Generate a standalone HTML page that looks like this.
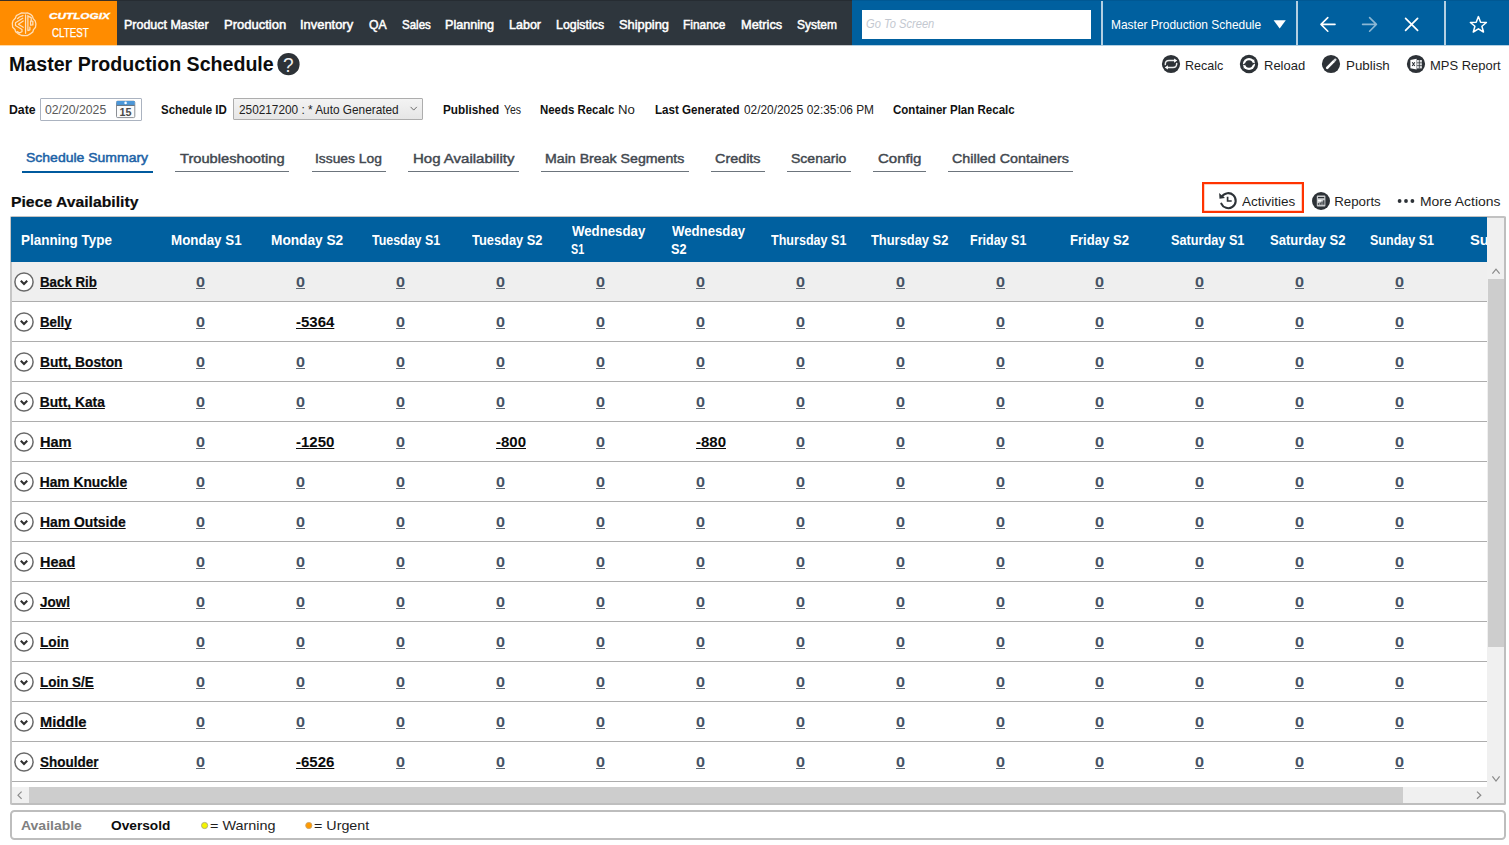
<!DOCTYPE html>
<html lang="en">
<head>
<meta charset="utf-8">
<title>Master Production Schedule</title>
<style>
html,body{margin:0;padding:0}
body{width:1509px;height:845px;position:relative;overflow:hidden;background:#fff;font-family:'Liberation Sans',sans-serif;color:#1e1e1e}
.t{position:absolute;white-space:pre;line-height:40px;transform-origin:0 0;display:block;margin:0;font-weight:400;text-decoration-skip-ink:none}
a.t{cursor:pointer}
svg{display:block;overflow:visible}
</style>
</head>
<body>
<header>
<div style="position:absolute;left:0px;top:0px;width:1509px;height:45px;background:#00609f"></div>
<div style="position:absolute;left:0px;top:0px;width:852px;height:45px;background:#2e363d"></div>
<div style="position:absolute;left:0px;top:0px;width:852px;height:1px;background:#262c32"></div>
<div style="position:absolute;left:0px;top:1px;width:117px;height:44px;background:#ff8c00"></div>
<div style="position:absolute;left:0px;top:0px;width:117px;height:1px;background:#3a3026"></div>
<div style="position:absolute;left:852px;top:0px;width:657px;height:1px;background:#005893"></div>
<div style="position:absolute;left:0px;top:45px;width:117px;height:1px;background:#ffd9a6"></div>
<div style="position:absolute;left:117px;top:45px;width:735px;height:1px;background:#c3c6c9"></div>
<div style="position:absolute;left:852px;top:45px;width:657px;height:1px;background:#b3d0e3"></div>
<svg style="position:absolute;left:10px;top:10px" width="28" height="28" viewBox="0 0 28 28"><path d="M15.08 3.05 L11.60 2.82 L8.95 4.24 L6.30 5.63 L5.30 8.28 L3.05 10.60 L2.32 13.25 L2.65 17.23 L4.97 19.55 L5.63 21.70 L8.28 23.86 L11.60 25.51 L15.08 25.58 L17.56 25.51 L20.21 23.92 L22.86 21.87 L23.53 19.55 L25.51 17.23 L25.91 13.92 L25.18 10.93 L23.19 8.68 L22.53 6.30 L20.54 4.31 L17.89 2.98 Z" fill="none" stroke="#fff" stroke-opacity=".72" stroke-width="1.3" stroke-linejoin="round"/><path d="M12.76 8.28 L5.47 12.76 L5.47 15.57 L11.99 19.55 L11.99 21.70 L9.44 22.86 L7.12 21.54 M13.25 11.00 L8.35 14.25 L13.25 17.23 M12.99 5.70 L9.44 7.02 L7.46 8.68 M15.57 4.97 L15.57 23.36 M17.89 5.30 L17.89 20.54 L19.88 19.88 L19.88 17.23 M18.95 6.63 L21.21 7.69 L21.21 10.93 L22.86 11.43 L22.86 14.91 L20.54 15.08 L20.54 11.10" fill="none" stroke="#fff" stroke-opacity=".74" stroke-width="1.25" stroke-linejoin="round" stroke-linecap="round"/></svg>
<span class="t" style="left:48.87px;top:-4px;font-size:9.4px;font-weight:700;font-style:italic;color:#fff;transform:scaleX(1.2539);-webkit-text-stroke:.35px #fff;">CUTLOGIX</span>
<span class="t" style="left:52.03px;top:13px;font-size:13px;color:#fff;transform:scaleX(0.7539);-webkit-text-stroke:.25px #fff;">CLTEST</span>
<a class="t" style="left:124.44px;top:5px;font-size:13px;color:#fff;transform:scaleX(0.9598);-webkit-text-stroke:.5px #fff;">Product Master</a>
<a class="t" style="left:224.00px;top:5px;font-size:13px;color:#fff;-webkit-text-stroke:.5px #fff;">Production</a>
<a class="t" style="left:300.16px;top:5px;font-size:13px;color:#fff;transform:scaleX(0.9933);-webkit-text-stroke:.5px #fff;">Inventory</a>
<a class="t" style="left:368.70px;top:5px;font-size:13px;color:#fff;transform:scaleX(0.9389);-webkit-text-stroke:.5px #fff;">QA</a>
<a class="t" style="left:401.54px;top:5px;font-size:13px;color:#fff;transform:scaleX(0.8864);-webkit-text-stroke:.5px #fff;">Sales</a>
<a class="t" style="left:444.83px;top:5px;font-size:13px;color:#fff;transform:scaleX(0.9703);-webkit-text-stroke:.5px #fff;">Planning</a>
<a class="t" style="left:508.74px;top:5px;font-size:13px;color:#fff;transform:scaleX(0.9625);-webkit-text-stroke:.5px #fff;">Labor</a>
<a class="t" style="left:555.85px;top:5px;font-size:13px;color:#fff;transform:scaleX(0.9510);-webkit-text-stroke:.5px #fff;">Logistics</a>
<a class="t" style="left:618.56px;top:5px;font-size:13px;color:#fff;transform:scaleX(0.9878);-webkit-text-stroke:.5px #fff;">Shipping</a>
<a class="t" style="left:683.08px;top:5px;font-size:13px;color:#fff;transform:scaleX(0.9162);-webkit-text-stroke:.5px #fff;">Finance</a>
<a class="t" style="left:740.52px;top:5px;font-size:13px;color:#fff;transform:scaleX(0.9827);-webkit-text-stroke:.5px #fff;">Metrics</a>
<a class="t" style="left:796.71px;top:5px;font-size:13px;color:#fff;transform:scaleX(0.9222);-webkit-text-stroke:.5px #fff;">System</a>
<div style="position:absolute;left:862px;top:9.6px;width:229.4px;height:29.3px;background:#fff"></div>
<span class="t" style="left:866.46px;top:4px;font-size:13px;font-style:italic;color:#c3c8d0;transform:scaleX(0.8561);">Go To Screen</span>
<div style="position:absolute;left:1101.4px;top:1px;width:1.6px;height:44px;background:rgba(255,255,255,.7)"></div>
<div style="position:absolute;left:1296.3px;top:1px;width:1.6px;height:44px;background:rgba(255,255,255,.7)"></div>
<div style="position:absolute;left:1444.2px;top:1px;width:1.6px;height:44px;background:rgba(255,255,255,.7)"></div>
<span class="t" style="left:1111.15px;top:5px;font-size:12.6px;color:#fff;transform:scaleX(0.9489);">Master Production Schedule</span>
<svg style="position:absolute;left:1270px;top:16px;" width="20" height="16" viewBox="0 0 20 16"><path d="M3.6 4.2 L15.8 4.2 L9.7 12.4 Z" fill="#fff"/></svg>
<svg style="position:absolute;left:1316px;top:14px;" width="24" height="22" viewBox="0 0 24 22"><path d="M19 10.4 H5 M11.8 3.6 L5 10.4 L11.8 17.2" fill="none" stroke="#fff" stroke-width="1.6" stroke-linecap="round" stroke-linejoin="round"/></svg>
<svg style="position:absolute;left:1358px;top:14px;" width="24" height="22" viewBox="0 0 24 22"><path d="M4.6 10.4 H18.4 M11.6 3.6 L18.4 10.4 L11.6 17.2" fill="none" stroke="#fff" stroke-opacity=".55" stroke-width="1.6" stroke-linecap="round" stroke-linejoin="round"/></svg>
<svg style="position:absolute;left:1400px;top:14px;" width="24" height="22" viewBox="0 0 24 22"><path d="M5.6 4.4 L17.6 16.4 M17.6 4.4 L5.6 16.4" fill="none" stroke="#fff" stroke-width="1.7" stroke-linecap="round"/></svg>
<svg style="position:absolute;left:1466px;top:12px;" width="26" height="26" viewBox="0 0 26 26"><path d="M12.4 4.6 L14.6 10.2 L20.4 10.5 L15.9 14.3 L17.5 20 L12.4 16.8 L7.3 20 L8.9 14.3 L4.4 10.5 L10.2 10.2 Z" fill="none" stroke="#fff" stroke-width="1.5" stroke-linejoin="round"/></svg>
</header>
<section>
<h1 class="t" style="left:8.88px;top:44px;font-size:20.7px;font-weight:700;color:#0c0c0c;transform:scaleX(0.9477);">Master Production Schedule</h1>
<svg style="position:absolute;left:276px;top:52px;" width="25" height="25" viewBox="0 0 25 25"><circle cx="12.5" cy="12.2" r="11.1" fill="#2d3237"/></svg>
<span class="t" style="left:283.20px;top:45px;font-size:20.4px;color:#eceded;transform:scaleX(0.9333);">?</span>
<svg style="position:absolute;left:1158.6px;top:52.4px;" width="24" height="24" viewBox="0 0 24 24"><circle cx="12" cy="12" r="9.1" fill="#2d3237"/><path d="M6.3 12.6 C6.2 9.8 7.4 8.6 10 8.6 H15.4 M17.7 11.4 C17.8 14.2 16.6 15.4 14 15.4 H8.6" fill="none" stroke="#eceded" stroke-width="1.5" stroke-linecap="round"/><path d="M15.1 6.5 L18.3 8.6 L15.1 10.7 Z M8.9 13.3 L5.7 15.4 L8.9 17.5 Z" fill="#fff"/></svg>
<span class="t" style="left:1184.86px;top:46px;font-size:13.3px;color:#1e1e1e;transform:scaleX(0.9427);">Recalc</span>
<svg style="position:absolute;left:1237.1px;top:52.4px;" width="24" height="24" viewBox="0 0 24 24"><circle cx="12" cy="12" r="9.2" fill="#2d3237"/><circle cx="12" cy="12" r="6.1" fill="#fff"/><circle cx="12" cy="12" r="3.7" fill="#2d3237"/><path d="M5.4 13 L9 10.6 L8.8 13.2 Z M18.6 11 L15 13.4 L15.2 10.8 Z" fill="#2d3237"/><path d="M14.6 8.6 L17.4 7.6 L17 10.6 Z M9.4 15.4 L6.6 16.4 L7 13.4 Z" fill="#fff"/></svg>
<span class="t" style="left:1263.82px;top:46px;font-size:13.3px;color:#1e1e1e;transform:scaleX(0.9764);">Reload</span>
<svg style="position:absolute;left:1319.4px;top:52.4px;" width="24" height="24" viewBox="0 0 24 24"><circle cx="12" cy="12" r="9.1" fill="#2d3237"/><path d="M8.2 15.8 L14.6 9.4" stroke="#fff" stroke-width="2.6" stroke-linecap="round"/><path d="M15.4 8.6 L16.3 7.7" stroke="#d8dadc" stroke-width="2.4" stroke-linecap="round"/></svg>
<span class="t" style="left:1346.20px;top:46px;font-size:13.3px;color:#1e1e1e;transform:scaleX(1.0036);">Publish</span>
<svg style="position:absolute;left:1403.6px;top:52.4px;" width="24" height="24" viewBox="0 0 24 24"><circle cx="12" cy="12" r="9.1" fill="#2d3237"/><path d="M6.4 8 L12.6 6.8 V17.4 L6.4 16.2 Z" fill="#fff"/><rect x="12.9" y="8" width="5" height="8.4" fill="#dcdee0"/><path d="M12.9 10.8 H17.9 M12.9 13.6 H17.9 M15.4 8 V16.4" stroke="#2d3237" stroke-width=".7"/><path d="M8.2 10.2 L10.8 14 M10.8 10.2 L8.2 14" stroke="#2d3237" stroke-width="1.1"/></svg>
<span class="t" style="left:1430.32px;top:46px;font-size:13.3px;color:#1e1e1e;transform:scaleX(0.9754);">MPS Report</span>
</section>
<section>
<label class="t" style="left:8.56px;top:90px;font-size:12.4px;font-weight:700;color:#111;transform:scaleX(0.9903);">Date</label>
<div style="position:absolute;left:39.8px;top:97.8px;width:100.4px;height:21.4px;background:#fff;border:1px solid #abb3c0;border-radius:1px"></div>
<span class="t" style="left:44.54px;top:90px;font-size:13.2px;color:#5a5a5a;transform:scaleX(0.9277);">02/20/2025</span>
<svg style="position:absolute;left:115px;top:100px" width="22" height="19" viewBox="0 0 22 19"><rect x="1.5" y="1.2" width="18.3" height="16.4" rx="1.2" fill="#fafbfc" stroke="#8b8f94" stroke-width="1"/><rect x="1.6" y="1" width="18.1" height="4" fill="#4b97d9"/><rect x="1.6" y="4.9" width="18.1" height="1" fill="#5c6a78"/><circle cx="10.6" cy="2.9" r="1.3" fill="#fff"/><text x="4.6" y="16" textLength="12" lengthAdjust="spacingAndGlyphs" font-family="'Liberation Sans',sans-serif" font-weight="700" font-size="10.4" fill="#4a4a4a">15</text></svg>
<label class="t" style="left:161.34px;top:90px;font-size:12.4px;font-weight:700;color:#111;transform:scaleX(0.9271);">Schedule ID</label>
<div style="position:absolute;left:233.4px;top:98.3px;width:187.5px;height:19.6px;background:linear-gradient(#f3f3f3,#e6e6e6);border:1px solid #adadad;border-radius:1px"></div>
<span class="t" style="left:239.48px;top:90px;font-size:12.4px;color:#222;transform:scaleX(0.9538);">250217200 : * Auto Generated</span>
<svg style="position:absolute;left:408px;top:104px;" width="12" height="10" viewBox="0 0 12 10"><path d="M2.6 2.9 L5.7 6.1 L8.8 2.9" fill="none" stroke="#6a6a6a" stroke-width="1"/></svg>
<label class="t" style="left:443.29px;top:90px;font-size:12.4px;font-weight:700;color:#111;transform:scaleX(0.9478);">Published</label>
<span class="t" style="left:503.79px;top:90px;font-size:12.4px;color:#222;transform:scaleX(0.8462);">Yes</span>
<label class="t" style="left:539.71px;top:90px;font-size:12.4px;font-weight:700;color:#111;transform:scaleX(0.9220);">Needs Recalc</label>
<span class="t" style="left:618.33px;top:90px;font-size:12.4px;color:#222;transform:scaleX(1.0667);">No</span>
<label class="t" style="left:655.00px;top:90px;font-size:12.4px;font-weight:700;color:#111;transform:scaleX(0.9367);">Last Generated</label>
<span class="t" style="left:744.02px;top:90px;font-size:12.4px;color:#222;transform:scaleX(0.9579);">02/20/2025 02:35:06 PM</span>
<label class="t" style="left:893.13px;top:90px;font-size:12.4px;font-weight:700;color:#111;transform:scaleX(0.9300);">Container Plan Recalc</label>
</section>
<nav>
<a class="t" style="left:25.83px;top:138px;font-size:13.7px;color:#1b62a6;transform:scaleX(1.0223);-webkit-text-stroke:.5px #1b62a6;">Schedule Summary</a>
<div style="position:absolute;left:21.6px;top:171px;width:131.8px;height:2.2px;background:#005a9e"></div>
<a class="t" style="left:180.33px;top:139px;font-size:13.7px;color:#42484f;transform:scaleX(1.0715);-webkit-text-stroke:.45px #42484f;">Troubleshooting</a>
<div style="position:absolute;left:175.3px;top:171.2px;width:114.0px;height:1.2px;background:#6c747c"></div>
<a class="t" style="left:315.14px;top:139px;font-size:13.7px;color:#42484f;transform:scaleX(1.0094);-webkit-text-stroke:.45px #42484f;">Issues Log</a>
<div style="position:absolute;left:311.5px;top:171.2px;width:74.5px;height:1.2px;background:#6c747c"></div>
<a class="t" style="left:412.53px;top:139px;font-size:13.7px;color:#42484f;transform:scaleX(1.0959);-webkit-text-stroke:.45px #42484f;">Hog Availability</a>
<div style="position:absolute;left:408.2px;top:171.2px;width:110.7px;height:1.2px;background:#6c747c"></div>
<a class="t" style="left:544.71px;top:139px;font-size:13.7px;color:#42484f;transform:scaleX(1.0346);-webkit-text-stroke:.45px #42484f;">Main Break Segments</a>
<div style="position:absolute;left:541px;top:171.2px;width:147.9px;height:1.2px;background:#6c747c"></div>
<a class="t" style="left:715.21px;top:139px;font-size:13.7px;color:#42484f;transform:scaleX(1.0500);-webkit-text-stroke:.45px #42484f;">Credits</a>
<div style="position:absolute;left:711px;top:171.2px;width:54px;height:1.2px;background:#6c747c"></div>
<a class="t" style="left:791.43px;top:139px;font-size:13.7px;color:#42484f;transform:scaleX(1.0237);-webkit-text-stroke:.45px #42484f;">Scenario</a>
<div style="position:absolute;left:787px;top:171.2px;width:64px;height:1.2px;background:#6c747c"></div>
<a class="t" style="left:877.58px;top:139px;font-size:13.7px;color:#42484f;transform:scaleX(1.0974);-webkit-text-stroke:.45px #42484f;">Config</a>
<div style="position:absolute;left:873px;top:171.2px;width:52.8px;height:1.2px;background:#6c747c"></div>
<a class="t" style="left:951.82px;top:139px;font-size:13.7px;color:#42484f;transform:scaleX(1.0452);-webkit-text-stroke:.45px #42484f;">Chilled Containers</a>
<div style="position:absolute;left:948px;top:171.2px;width:124.8px;height:1.2px;background:#6c747c"></div>
<h2 class="t" style="left:10.58px;top:182px;font-size:15.5px;font-weight:700;color:#0c0c0c;transform:scaleX(1.0157);-webkit-text-stroke:.2px #0c0c0c;">Piece Availability</h2>
<div style="position:absolute;left:1202px;top:182px;width:98px;height:26.5px;border:2px solid #ff3300;box-shadow:inset 0 0 0 .5px rgba(255,51,0,.45)"></div>
<svg style="position:absolute;left:1216px;top:188px" width="26" height="26" viewBox="0 0 26 26"><path d="M5.9 8.6 A7.5 7.5 0 1 1 5.3 15.6" fill="none" stroke="#2d3237" stroke-width="2.1" stroke-linecap="round"/><path d="M3.1 5 L3.5 10.8 L9 10 Z" fill="#2d3237"/><path d="M11.6 8.8 V13 H15.7" fill="none" stroke="#2d3237" stroke-width="1.7"/></svg>
<span class="t" style="left:1242.40px;top:182px;font-size:13.3px;color:#1e1e1e;transform:scaleX(1.0135);">Activities</span>
<svg style="position:absolute;left:1308.9px;top:188.7px;" width="24" height="24" viewBox="0 0 24 24"><circle cx="12" cy="12" r="9" fill="#2d3237"/><rect x="7.8" y="6.6" width="8.6" height="11" rx=".8" fill="#c9cbcd"/><rect x="9" y="8" width="6.2" height="1.2" fill="#2d3237"/><path d="M9.4 15.8 V14.2 M11.2 15.8 V13.4 M13 15.8 V12.4 M14.8 15.8 V11.2" stroke="#2d3237" stroke-width="1.2"/><rect x="9" y="10.8" width="3.4" height="1.6" fill="#fff"/></svg>
<span class="t" style="left:1334.20px;top:182px;font-size:13.3px;color:#1e1e1e;">Reports</span>
<svg style="position:absolute;left:1396px;top:196px;" width="20" height="10" viewBox="0 0 20 10"><circle cx="3.6" cy="5" r="1.9" fill="#2d3237"/><circle cx="10" cy="5" r="1.9" fill="#2d3237"/><circle cx="16.4" cy="5" r="1.9" fill="#2d3237"/></svg>
<span class="t" style="left:1419.85px;top:182px;font-size:13.3px;color:#1e1e1e;transform:scaleX(1.0472);">More Actions</span>
</nav>
<main>
<div style="position:absolute;left:10px;top:216px;width:1492px;height:585px;border:2px solid #bebebe;border-left-color:#c6c6c6;border-top-color:#c2c2c2;border-radius:2px;background:#fff"></div>
<div style="position:absolute;left:11px;top:217px;width:1476px;height:45px;background:#00609f"></div>
<span class="t" style="left:20.83px;top:221px;font-size:13.8px;font-weight:700;color:#fff;transform:scaleX(0.9744);">Planning Type</span>
<span class="t" style="left:170.63px;top:221px;font-size:13.8px;font-weight:700;color:#fff;transform:scaleX(0.9692);">Monday S1</span>
<span class="t" style="left:270.71px;top:221px;font-size:13.8px;font-weight:700;color:#fff;transform:scaleX(0.9909);">Monday S2</span>
<span class="t" style="left:371.57px;top:221px;font-size:13.8px;font-weight:700;color:#fff;transform:scaleX(0.9013);">Tuesday S1</span>
<span class="t" style="left:471.57px;top:221px;font-size:13.8px;font-weight:700;color:#fff;transform:scaleX(0.9311);">Tuesday S2</span>
<span class="t" style="left:771.17px;top:221px;font-size:13.8px;font-weight:700;color:#fff;transform:scaleX(0.9106);">Thursday S1</span>
<span class="t" style="left:871.17px;top:221px;font-size:13.8px;font-weight:700;color:#fff;transform:scaleX(0.9341);">Thursday S2</span>
<span class="t" style="left:970.29px;top:221px;font-size:13.8px;font-weight:700;color:#fff;transform:scaleX(0.9070);">Friday S1</span>
<span class="t" style="left:1069.85px;top:221px;font-size:13.8px;font-weight:700;color:#fff;transform:scaleX(0.9488);">Friday S2</span>
<span class="t" style="left:1170.54px;top:221px;font-size:13.8px;font-weight:700;color:#fff;transform:scaleX(0.9206);">Saturday S1</span>
<span class="t" style="left:1270.33px;top:221px;font-size:13.8px;font-weight:700;color:#fff;transform:scaleX(0.9473);">Saturday S2</span>
<span class="t" style="left:1370.25px;top:221px;font-size:13.8px;font-weight:700;color:#fff;transform:scaleX(0.9075);">Sunday S1</span>
<span class="t" style="left:571.70px;top:212px;font-size:13.8px;font-weight:700;color:#fff;transform:scaleX(0.9587);">Wednesday</span>
<span class="t" style="left:571.31px;top:230px;font-size:13.8px;font-weight:700;color:#fff;transform:scaleX(0.7812);">S1</span>
<span class="t" style="left:671.60px;top:212px;font-size:13.8px;font-weight:700;color:#fff;transform:scaleX(0.9561);">Wednesday</span>
<span class="t" style="left:671.14px;top:230px;font-size:13.8px;font-weight:700;color:#fff;transform:scaleX(0.9206);">S2</span>
<div style="position:absolute;left:1460px;top:217px;width:27.0px;height:45px;overflow:hidden">
<span class="t" style="left:10.27px;top:4px;font-size:13.8px;font-weight:700;color:#fff;transform:scaleX(1.0700);">Sunday S2</span>
</div>
<div role="row">
<div style="position:absolute;left:12px;top:262px;width:1475px;height:39px;background:#efefef"></div>
<div style="position:absolute;left:12px;top:301px;width:1475px;height:1px;background:#adadad"></div>
<svg style="position:absolute;left:12px;top:269.5px;" width="24" height="24" viewBox="0 0 24 24"><circle cx="12" cy="12" r="9.1" fill="#fff" stroke="#6a6a6a" stroke-width="1.5"/><path d="M8.8 10.7 L12 13.9 L15.2 10.7" fill="none" stroke="#303030" stroke-width="2.1"/></svg>
<a class="t" style="left:39.74px;top:263px;font-size:13.8px;font-weight:700;text-decoration:underline;color:#0c0c0c;transform:scaleX(0.9635);-webkit-text-stroke:.2px #0c0c0c;">Back Rib</a>
<a class="t" style="left:195.92px;top:262px;font-size:14px;font-weight:700;text-decoration:underline;color:#465464;transform:scaleX(1.1556);text-decoration-color:#5d6874;">0</a>
<a class="t" style="left:295.87px;top:262px;font-size:14px;font-weight:700;text-decoration:underline;color:#465464;transform:scaleX(1.1556);text-decoration-color:#5d6874;">0</a>
<a class="t" style="left:395.82px;top:262px;font-size:14px;font-weight:700;text-decoration:underline;color:#465464;transform:scaleX(1.1556);text-decoration-color:#5d6874;">0</a>
<a class="t" style="left:495.77px;top:262px;font-size:14px;font-weight:700;text-decoration:underline;color:#465464;transform:scaleX(1.1556);text-decoration-color:#5d6874;">0</a>
<a class="t" style="left:595.72px;top:262px;font-size:14px;font-weight:700;text-decoration:underline;color:#465464;transform:scaleX(1.1556);text-decoration-color:#5d6874;">0</a>
<a class="t" style="left:695.67px;top:262px;font-size:14px;font-weight:700;text-decoration:underline;color:#465464;transform:scaleX(1.1556);text-decoration-color:#5d6874;">0</a>
<a class="t" style="left:795.62px;top:262px;font-size:14px;font-weight:700;text-decoration:underline;color:#465464;transform:scaleX(1.1556);text-decoration-color:#5d6874;">0</a>
<a class="t" style="left:895.57px;top:262px;font-size:14px;font-weight:700;text-decoration:underline;color:#465464;transform:scaleX(1.1556);text-decoration-color:#5d6874;">0</a>
<a class="t" style="left:995.52px;top:262px;font-size:14px;font-weight:700;text-decoration:underline;color:#465464;transform:scaleX(1.1556);text-decoration-color:#5d6874;">0</a>
<a class="t" style="left:1095.47px;top:262px;font-size:14px;font-weight:700;text-decoration:underline;color:#465464;transform:scaleX(1.1556);text-decoration-color:#5d6874;">0</a>
<a class="t" style="left:1195.42px;top:262px;font-size:14px;font-weight:700;text-decoration:underline;color:#465464;transform:scaleX(1.1556);text-decoration-color:#5d6874;">0</a>
<a class="t" style="left:1295.37px;top:262px;font-size:14px;font-weight:700;text-decoration:underline;color:#465464;transform:scaleX(1.1556);text-decoration-color:#5d6874;">0</a>
<a class="t" style="left:1395.32px;top:262px;font-size:14px;font-weight:700;text-decoration:underline;color:#465464;transform:scaleX(1.1556);text-decoration-color:#5d6874;">0</a>
</div>
<div role="row">
<div style="position:absolute;left:12px;top:302px;width:1475px;height:39px;background:#fff"></div>
<div style="position:absolute;left:12px;top:341px;width:1475px;height:1px;background:#adadad"></div>
<svg style="position:absolute;left:12px;top:309.5px;" width="24" height="24" viewBox="0 0 24 24"><circle cx="12" cy="12" r="9.1" fill="#fff" stroke="#6a6a6a" stroke-width="1.5"/><path d="M8.8 10.7 L12 13.9 L15.2 10.7" fill="none" stroke="#303030" stroke-width="2.1"/></svg>
<a class="t" style="left:39.74px;top:303px;font-size:13.8px;font-weight:700;text-decoration:underline;color:#0c0c0c;transform:scaleX(0.9606);-webkit-text-stroke:.2px #0c0c0c;">Belly</a>
<a class="t" style="left:195.92px;top:302px;font-size:14px;font-weight:700;text-decoration:underline;color:#465464;transform:scaleX(1.1556);text-decoration-color:#5d6874;">0</a>
<a class="t" style="left:295.96px;top:302px;font-size:14px;font-weight:700;text-decoration:underline;color:#0c0c0c;transform:scaleX(1.0700);">-5364</a>
<a class="t" style="left:395.82px;top:302px;font-size:14px;font-weight:700;text-decoration:underline;color:#465464;transform:scaleX(1.1556);text-decoration-color:#5d6874;">0</a>
<a class="t" style="left:495.77px;top:302px;font-size:14px;font-weight:700;text-decoration:underline;color:#465464;transform:scaleX(1.1556);text-decoration-color:#5d6874;">0</a>
<a class="t" style="left:595.72px;top:302px;font-size:14px;font-weight:700;text-decoration:underline;color:#465464;transform:scaleX(1.1556);text-decoration-color:#5d6874;">0</a>
<a class="t" style="left:695.67px;top:302px;font-size:14px;font-weight:700;text-decoration:underline;color:#465464;transform:scaleX(1.1556);text-decoration-color:#5d6874;">0</a>
<a class="t" style="left:795.62px;top:302px;font-size:14px;font-weight:700;text-decoration:underline;color:#465464;transform:scaleX(1.1556);text-decoration-color:#5d6874;">0</a>
<a class="t" style="left:895.57px;top:302px;font-size:14px;font-weight:700;text-decoration:underline;color:#465464;transform:scaleX(1.1556);text-decoration-color:#5d6874;">0</a>
<a class="t" style="left:995.52px;top:302px;font-size:14px;font-weight:700;text-decoration:underline;color:#465464;transform:scaleX(1.1556);text-decoration-color:#5d6874;">0</a>
<a class="t" style="left:1095.47px;top:302px;font-size:14px;font-weight:700;text-decoration:underline;color:#465464;transform:scaleX(1.1556);text-decoration-color:#5d6874;">0</a>
<a class="t" style="left:1195.42px;top:302px;font-size:14px;font-weight:700;text-decoration:underline;color:#465464;transform:scaleX(1.1556);text-decoration-color:#5d6874;">0</a>
<a class="t" style="left:1295.37px;top:302px;font-size:14px;font-weight:700;text-decoration:underline;color:#465464;transform:scaleX(1.1556);text-decoration-color:#5d6874;">0</a>
<a class="t" style="left:1395.32px;top:302px;font-size:14px;font-weight:700;text-decoration:underline;color:#465464;transform:scaleX(1.1556);text-decoration-color:#5d6874;">0</a>
</div>
<div role="row">
<div style="position:absolute;left:12px;top:342px;width:1475px;height:39px;background:#fff"></div>
<div style="position:absolute;left:12px;top:381px;width:1475px;height:1px;background:#adadad"></div>
<svg style="position:absolute;left:12px;top:349.5px;" width="24" height="24" viewBox="0 0 24 24"><circle cx="12" cy="12" r="9.1" fill="#fff" stroke="#6a6a6a" stroke-width="1.5"/><path d="M8.8 10.7 L12 13.9 L15.2 10.7" fill="none" stroke="#303030" stroke-width="2.1"/></svg>
<a class="t" style="left:39.70px;top:343px;font-size:13.8px;font-weight:700;text-decoration:underline;color:#0c0c0c;transform:scaleX(0.9963);-webkit-text-stroke:.2px #0c0c0c;">Butt, Boston</a>
<a class="t" style="left:195.92px;top:342px;font-size:14px;font-weight:700;text-decoration:underline;color:#465464;transform:scaleX(1.1556);text-decoration-color:#5d6874;">0</a>
<a class="t" style="left:295.87px;top:342px;font-size:14px;font-weight:700;text-decoration:underline;color:#465464;transform:scaleX(1.1556);text-decoration-color:#5d6874;">0</a>
<a class="t" style="left:395.82px;top:342px;font-size:14px;font-weight:700;text-decoration:underline;color:#465464;transform:scaleX(1.1556);text-decoration-color:#5d6874;">0</a>
<a class="t" style="left:495.77px;top:342px;font-size:14px;font-weight:700;text-decoration:underline;color:#465464;transform:scaleX(1.1556);text-decoration-color:#5d6874;">0</a>
<a class="t" style="left:595.72px;top:342px;font-size:14px;font-weight:700;text-decoration:underline;color:#465464;transform:scaleX(1.1556);text-decoration-color:#5d6874;">0</a>
<a class="t" style="left:695.67px;top:342px;font-size:14px;font-weight:700;text-decoration:underline;color:#465464;transform:scaleX(1.1556);text-decoration-color:#5d6874;">0</a>
<a class="t" style="left:795.62px;top:342px;font-size:14px;font-weight:700;text-decoration:underline;color:#465464;transform:scaleX(1.1556);text-decoration-color:#5d6874;">0</a>
<a class="t" style="left:895.57px;top:342px;font-size:14px;font-weight:700;text-decoration:underline;color:#465464;transform:scaleX(1.1556);text-decoration-color:#5d6874;">0</a>
<a class="t" style="left:995.52px;top:342px;font-size:14px;font-weight:700;text-decoration:underline;color:#465464;transform:scaleX(1.1556);text-decoration-color:#5d6874;">0</a>
<a class="t" style="left:1095.47px;top:342px;font-size:14px;font-weight:700;text-decoration:underline;color:#465464;transform:scaleX(1.1556);text-decoration-color:#5d6874;">0</a>
<a class="t" style="left:1195.42px;top:342px;font-size:14px;font-weight:700;text-decoration:underline;color:#465464;transform:scaleX(1.1556);text-decoration-color:#5d6874;">0</a>
<a class="t" style="left:1295.37px;top:342px;font-size:14px;font-weight:700;text-decoration:underline;color:#465464;transform:scaleX(1.1556);text-decoration-color:#5d6874;">0</a>
<a class="t" style="left:1395.32px;top:342px;font-size:14px;font-weight:700;text-decoration:underline;color:#465464;transform:scaleX(1.1556);text-decoration-color:#5d6874;">0</a>
</div>
<div role="row">
<div style="position:absolute;left:12px;top:382px;width:1475px;height:39px;background:#fff"></div>
<div style="position:absolute;left:12px;top:421px;width:1475px;height:1px;background:#adadad"></div>
<svg style="position:absolute;left:12px;top:389.5px;" width="24" height="24" viewBox="0 0 24 24"><circle cx="12" cy="12" r="9.1" fill="#fff" stroke="#6a6a6a" stroke-width="1.5"/><path d="M8.8 10.7 L12 13.9 L15.2 10.7" fill="none" stroke="#303030" stroke-width="2.1"/></svg>
<a class="t" style="left:39.70px;top:383px;font-size:13.8px;font-weight:700;text-decoration:underline;color:#0c0c0c;-webkit-text-stroke:.2px #0c0c0c;">Butt, Kata</a>
<a class="t" style="left:195.92px;top:382px;font-size:14px;font-weight:700;text-decoration:underline;color:#465464;transform:scaleX(1.1556);text-decoration-color:#5d6874;">0</a>
<a class="t" style="left:295.87px;top:382px;font-size:14px;font-weight:700;text-decoration:underline;color:#465464;transform:scaleX(1.1556);text-decoration-color:#5d6874;">0</a>
<a class="t" style="left:395.82px;top:382px;font-size:14px;font-weight:700;text-decoration:underline;color:#465464;transform:scaleX(1.1556);text-decoration-color:#5d6874;">0</a>
<a class="t" style="left:495.77px;top:382px;font-size:14px;font-weight:700;text-decoration:underline;color:#465464;transform:scaleX(1.1556);text-decoration-color:#5d6874;">0</a>
<a class="t" style="left:595.72px;top:382px;font-size:14px;font-weight:700;text-decoration:underline;color:#465464;transform:scaleX(1.1556);text-decoration-color:#5d6874;">0</a>
<a class="t" style="left:695.67px;top:382px;font-size:14px;font-weight:700;text-decoration:underline;color:#465464;transform:scaleX(1.1556);text-decoration-color:#5d6874;">0</a>
<a class="t" style="left:795.62px;top:382px;font-size:14px;font-weight:700;text-decoration:underline;color:#465464;transform:scaleX(1.1556);text-decoration-color:#5d6874;">0</a>
<a class="t" style="left:895.57px;top:382px;font-size:14px;font-weight:700;text-decoration:underline;color:#465464;transform:scaleX(1.1556);text-decoration-color:#5d6874;">0</a>
<a class="t" style="left:995.52px;top:382px;font-size:14px;font-weight:700;text-decoration:underline;color:#465464;transform:scaleX(1.1556);text-decoration-color:#5d6874;">0</a>
<a class="t" style="left:1095.47px;top:382px;font-size:14px;font-weight:700;text-decoration:underline;color:#465464;transform:scaleX(1.1556);text-decoration-color:#5d6874;">0</a>
<a class="t" style="left:1195.42px;top:382px;font-size:14px;font-weight:700;text-decoration:underline;color:#465464;transform:scaleX(1.1556);text-decoration-color:#5d6874;">0</a>
<a class="t" style="left:1295.37px;top:382px;font-size:14px;font-weight:700;text-decoration:underline;color:#465464;transform:scaleX(1.1556);text-decoration-color:#5d6874;">0</a>
<a class="t" style="left:1395.32px;top:382px;font-size:14px;font-weight:700;text-decoration:underline;color:#465464;transform:scaleX(1.1556);text-decoration-color:#5d6874;">0</a>
</div>
<div role="row">
<div style="position:absolute;left:12px;top:422px;width:1475px;height:39px;background:#fff"></div>
<div style="position:absolute;left:12px;top:461px;width:1475px;height:1px;background:#adadad"></div>
<svg style="position:absolute;left:12px;top:429.5px;" width="24" height="24" viewBox="0 0 24 24"><circle cx="12" cy="12" r="9.1" fill="#fff" stroke="#6a6a6a" stroke-width="1.5"/><path d="M8.8 10.7 L12 13.9 L15.2 10.7" fill="none" stroke="#303030" stroke-width="2.1"/></svg>
<a class="t" style="left:39.65px;top:423px;font-size:13.8px;font-weight:700;text-decoration:underline;color:#0c0c0c;transform:scaleX(1.0536);-webkit-text-stroke:.2px #0c0c0c;">Ham</a>
<a class="t" style="left:195.92px;top:422px;font-size:14px;font-weight:700;text-decoration:underline;color:#465464;transform:scaleX(1.1556);text-decoration-color:#5d6874;">0</a>
<a class="t" style="left:295.96px;top:422px;font-size:14px;font-weight:700;text-decoration:underline;color:#0c0c0c;transform:scaleX(1.0700);">-1250</a>
<a class="t" style="left:395.82px;top:422px;font-size:14px;font-weight:700;text-decoration:underline;color:#465464;transform:scaleX(1.1556);text-decoration-color:#5d6874;">0</a>
<a class="t" style="left:495.96px;top:422px;font-size:14px;font-weight:700;text-decoration:underline;color:#0c0c0c;transform:scaleX(1.0700);">-800</a>
<a class="t" style="left:595.72px;top:422px;font-size:14px;font-weight:700;text-decoration:underline;color:#465464;transform:scaleX(1.1556);text-decoration-color:#5d6874;">0</a>
<a class="t" style="left:695.97px;top:422px;font-size:14px;font-weight:700;text-decoration:underline;color:#0c0c0c;transform:scaleX(1.0700);">-880</a>
<a class="t" style="left:795.62px;top:422px;font-size:14px;font-weight:700;text-decoration:underline;color:#465464;transform:scaleX(1.1556);text-decoration-color:#5d6874;">0</a>
<a class="t" style="left:895.57px;top:422px;font-size:14px;font-weight:700;text-decoration:underline;color:#465464;transform:scaleX(1.1556);text-decoration-color:#5d6874;">0</a>
<a class="t" style="left:995.52px;top:422px;font-size:14px;font-weight:700;text-decoration:underline;color:#465464;transform:scaleX(1.1556);text-decoration-color:#5d6874;">0</a>
<a class="t" style="left:1095.47px;top:422px;font-size:14px;font-weight:700;text-decoration:underline;color:#465464;transform:scaleX(1.1556);text-decoration-color:#5d6874;">0</a>
<a class="t" style="left:1195.42px;top:422px;font-size:14px;font-weight:700;text-decoration:underline;color:#465464;transform:scaleX(1.1556);text-decoration-color:#5d6874;">0</a>
<a class="t" style="left:1295.37px;top:422px;font-size:14px;font-weight:700;text-decoration:underline;color:#465464;transform:scaleX(1.1556);text-decoration-color:#5d6874;">0</a>
<a class="t" style="left:1395.32px;top:422px;font-size:14px;font-weight:700;text-decoration:underline;color:#465464;transform:scaleX(1.1556);text-decoration-color:#5d6874;">0</a>
</div>
<div role="row">
<div style="position:absolute;left:12px;top:462px;width:1475px;height:39px;background:#fff"></div>
<div style="position:absolute;left:12px;top:501px;width:1475px;height:1px;background:#adadad"></div>
<svg style="position:absolute;left:12px;top:469.5px;" width="24" height="24" viewBox="0 0 24 24"><circle cx="12" cy="12" r="9.1" fill="#fff" stroke="#6a6a6a" stroke-width="1.5"/><path d="M8.8 10.7 L12 13.9 L15.2 10.7" fill="none" stroke="#303030" stroke-width="2.1"/></svg>
<a class="t" style="left:39.70px;top:463px;font-size:13.8px;font-weight:700;text-decoration:underline;color:#0c0c0c;-webkit-text-stroke:.2px #0c0c0c;">Ham Knuckle</a>
<a class="t" style="left:195.92px;top:462px;font-size:14px;font-weight:700;text-decoration:underline;color:#465464;transform:scaleX(1.1556);text-decoration-color:#5d6874;">0</a>
<a class="t" style="left:295.87px;top:462px;font-size:14px;font-weight:700;text-decoration:underline;color:#465464;transform:scaleX(1.1556);text-decoration-color:#5d6874;">0</a>
<a class="t" style="left:395.82px;top:462px;font-size:14px;font-weight:700;text-decoration:underline;color:#465464;transform:scaleX(1.1556);text-decoration-color:#5d6874;">0</a>
<a class="t" style="left:495.77px;top:462px;font-size:14px;font-weight:700;text-decoration:underline;color:#465464;transform:scaleX(1.1556);text-decoration-color:#5d6874;">0</a>
<a class="t" style="left:595.72px;top:462px;font-size:14px;font-weight:700;text-decoration:underline;color:#465464;transform:scaleX(1.1556);text-decoration-color:#5d6874;">0</a>
<a class="t" style="left:695.67px;top:462px;font-size:14px;font-weight:700;text-decoration:underline;color:#465464;transform:scaleX(1.1556);text-decoration-color:#5d6874;">0</a>
<a class="t" style="left:795.62px;top:462px;font-size:14px;font-weight:700;text-decoration:underline;color:#465464;transform:scaleX(1.1556);text-decoration-color:#5d6874;">0</a>
<a class="t" style="left:895.57px;top:462px;font-size:14px;font-weight:700;text-decoration:underline;color:#465464;transform:scaleX(1.1556);text-decoration-color:#5d6874;">0</a>
<a class="t" style="left:995.52px;top:462px;font-size:14px;font-weight:700;text-decoration:underline;color:#465464;transform:scaleX(1.1556);text-decoration-color:#5d6874;">0</a>
<a class="t" style="left:1095.47px;top:462px;font-size:14px;font-weight:700;text-decoration:underline;color:#465464;transform:scaleX(1.1556);text-decoration-color:#5d6874;">0</a>
<a class="t" style="left:1195.42px;top:462px;font-size:14px;font-weight:700;text-decoration:underline;color:#465464;transform:scaleX(1.1556);text-decoration-color:#5d6874;">0</a>
<a class="t" style="left:1295.37px;top:462px;font-size:14px;font-weight:700;text-decoration:underline;color:#465464;transform:scaleX(1.1556);text-decoration-color:#5d6874;">0</a>
<a class="t" style="left:1395.32px;top:462px;font-size:14px;font-weight:700;text-decoration:underline;color:#465464;transform:scaleX(1.1556);text-decoration-color:#5d6874;">0</a>
</div>
<div role="row">
<div style="position:absolute;left:12px;top:502px;width:1475px;height:39px;background:#fff"></div>
<div style="position:absolute;left:12px;top:541px;width:1475px;height:1px;background:#adadad"></div>
<svg style="position:absolute;left:12px;top:509.5px;" width="24" height="24" viewBox="0 0 24 24"><circle cx="12" cy="12" r="9.1" fill="#fff" stroke="#6a6a6a" stroke-width="1.5"/><path d="M8.8 10.7 L12 13.9 L15.2 10.7" fill="none" stroke="#303030" stroke-width="2.1"/></svg>
<a class="t" style="left:39.69px;top:503px;font-size:13.8px;font-weight:700;text-decoration:underline;color:#0c0c0c;transform:scaleX(1.0066);-webkit-text-stroke:.2px #0c0c0c;">Ham Outside</a>
<a class="t" style="left:195.92px;top:502px;font-size:14px;font-weight:700;text-decoration:underline;color:#465464;transform:scaleX(1.1556);text-decoration-color:#5d6874;">0</a>
<a class="t" style="left:295.87px;top:502px;font-size:14px;font-weight:700;text-decoration:underline;color:#465464;transform:scaleX(1.1556);text-decoration-color:#5d6874;">0</a>
<a class="t" style="left:395.82px;top:502px;font-size:14px;font-weight:700;text-decoration:underline;color:#465464;transform:scaleX(1.1556);text-decoration-color:#5d6874;">0</a>
<a class="t" style="left:495.77px;top:502px;font-size:14px;font-weight:700;text-decoration:underline;color:#465464;transform:scaleX(1.1556);text-decoration-color:#5d6874;">0</a>
<a class="t" style="left:595.72px;top:502px;font-size:14px;font-weight:700;text-decoration:underline;color:#465464;transform:scaleX(1.1556);text-decoration-color:#5d6874;">0</a>
<a class="t" style="left:695.67px;top:502px;font-size:14px;font-weight:700;text-decoration:underline;color:#465464;transform:scaleX(1.1556);text-decoration-color:#5d6874;">0</a>
<a class="t" style="left:795.62px;top:502px;font-size:14px;font-weight:700;text-decoration:underline;color:#465464;transform:scaleX(1.1556);text-decoration-color:#5d6874;">0</a>
<a class="t" style="left:895.57px;top:502px;font-size:14px;font-weight:700;text-decoration:underline;color:#465464;transform:scaleX(1.1556);text-decoration-color:#5d6874;">0</a>
<a class="t" style="left:995.52px;top:502px;font-size:14px;font-weight:700;text-decoration:underline;color:#465464;transform:scaleX(1.1556);text-decoration-color:#5d6874;">0</a>
<a class="t" style="left:1095.47px;top:502px;font-size:14px;font-weight:700;text-decoration:underline;color:#465464;transform:scaleX(1.1556);text-decoration-color:#5d6874;">0</a>
<a class="t" style="left:1195.42px;top:502px;font-size:14px;font-weight:700;text-decoration:underline;color:#465464;transform:scaleX(1.1556);text-decoration-color:#5d6874;">0</a>
<a class="t" style="left:1295.37px;top:502px;font-size:14px;font-weight:700;text-decoration:underline;color:#465464;transform:scaleX(1.1556);text-decoration-color:#5d6874;">0</a>
<a class="t" style="left:1395.32px;top:502px;font-size:14px;font-weight:700;text-decoration:underline;color:#465464;transform:scaleX(1.1556);text-decoration-color:#5d6874;">0</a>
</div>
<div role="row">
<div style="position:absolute;left:12px;top:542px;width:1475px;height:39px;background:#fff"></div>
<div style="position:absolute;left:12px;top:581px;width:1475px;height:1px;background:#adadad"></div>
<svg style="position:absolute;left:12px;top:549.5px;" width="24" height="24" viewBox="0 0 24 24"><circle cx="12" cy="12" r="9.1" fill="#fff" stroke="#6a6a6a" stroke-width="1.5"/><path d="M8.8 10.7 L12 13.9 L15.2 10.7" fill="none" stroke="#303030" stroke-width="2.1"/></svg>
<a class="t" style="left:39.66px;top:543px;font-size:13.8px;font-weight:700;text-decoration:underline;color:#0c0c0c;transform:scaleX(1.0425);-webkit-text-stroke:.2px #0c0c0c;">Head</a>
<a class="t" style="left:195.92px;top:542px;font-size:14px;font-weight:700;text-decoration:underline;color:#465464;transform:scaleX(1.1556);text-decoration-color:#5d6874;">0</a>
<a class="t" style="left:295.87px;top:542px;font-size:14px;font-weight:700;text-decoration:underline;color:#465464;transform:scaleX(1.1556);text-decoration-color:#5d6874;">0</a>
<a class="t" style="left:395.82px;top:542px;font-size:14px;font-weight:700;text-decoration:underline;color:#465464;transform:scaleX(1.1556);text-decoration-color:#5d6874;">0</a>
<a class="t" style="left:495.77px;top:542px;font-size:14px;font-weight:700;text-decoration:underline;color:#465464;transform:scaleX(1.1556);text-decoration-color:#5d6874;">0</a>
<a class="t" style="left:595.72px;top:542px;font-size:14px;font-weight:700;text-decoration:underline;color:#465464;transform:scaleX(1.1556);text-decoration-color:#5d6874;">0</a>
<a class="t" style="left:695.67px;top:542px;font-size:14px;font-weight:700;text-decoration:underline;color:#465464;transform:scaleX(1.1556);text-decoration-color:#5d6874;">0</a>
<a class="t" style="left:795.62px;top:542px;font-size:14px;font-weight:700;text-decoration:underline;color:#465464;transform:scaleX(1.1556);text-decoration-color:#5d6874;">0</a>
<a class="t" style="left:895.57px;top:542px;font-size:14px;font-weight:700;text-decoration:underline;color:#465464;transform:scaleX(1.1556);text-decoration-color:#5d6874;">0</a>
<a class="t" style="left:995.52px;top:542px;font-size:14px;font-weight:700;text-decoration:underline;color:#465464;transform:scaleX(1.1556);text-decoration-color:#5d6874;">0</a>
<a class="t" style="left:1095.47px;top:542px;font-size:14px;font-weight:700;text-decoration:underline;color:#465464;transform:scaleX(1.1556);text-decoration-color:#5d6874;">0</a>
<a class="t" style="left:1195.42px;top:542px;font-size:14px;font-weight:700;text-decoration:underline;color:#465464;transform:scaleX(1.1556);text-decoration-color:#5d6874;">0</a>
<a class="t" style="left:1295.37px;top:542px;font-size:14px;font-weight:700;text-decoration:underline;color:#465464;transform:scaleX(1.1556);text-decoration-color:#5d6874;">0</a>
<a class="t" style="left:1395.32px;top:542px;font-size:14px;font-weight:700;text-decoration:underline;color:#465464;transform:scaleX(1.1556);text-decoration-color:#5d6874;">0</a>
</div>
<div role="row">
<div style="position:absolute;left:12px;top:582px;width:1475px;height:39px;background:#fff"></div>
<div style="position:absolute;left:12px;top:621px;width:1475px;height:1px;background:#adadad"></div>
<svg style="position:absolute;left:12px;top:589.5px;" width="24" height="24" viewBox="0 0 24 24"><circle cx="12" cy="12" r="9.1" fill="#fff" stroke="#6a6a6a" stroke-width="1.5"/><path d="M8.8 10.7 L12 13.9 L15.2 10.7" fill="none" stroke="#303030" stroke-width="2.1"/></svg>
<a class="t" style="left:40.46px;top:583px;font-size:13.8px;font-weight:700;text-decoration:underline;color:#0c0c0c;transform:scaleX(0.9763);-webkit-text-stroke:.2px #0c0c0c;">Jowl</a>
<a class="t" style="left:195.92px;top:582px;font-size:14px;font-weight:700;text-decoration:underline;color:#465464;transform:scaleX(1.1556);text-decoration-color:#5d6874;">0</a>
<a class="t" style="left:295.87px;top:582px;font-size:14px;font-weight:700;text-decoration:underline;color:#465464;transform:scaleX(1.1556);text-decoration-color:#5d6874;">0</a>
<a class="t" style="left:395.82px;top:582px;font-size:14px;font-weight:700;text-decoration:underline;color:#465464;transform:scaleX(1.1556);text-decoration-color:#5d6874;">0</a>
<a class="t" style="left:495.77px;top:582px;font-size:14px;font-weight:700;text-decoration:underline;color:#465464;transform:scaleX(1.1556);text-decoration-color:#5d6874;">0</a>
<a class="t" style="left:595.72px;top:582px;font-size:14px;font-weight:700;text-decoration:underline;color:#465464;transform:scaleX(1.1556);text-decoration-color:#5d6874;">0</a>
<a class="t" style="left:695.67px;top:582px;font-size:14px;font-weight:700;text-decoration:underline;color:#465464;transform:scaleX(1.1556);text-decoration-color:#5d6874;">0</a>
<a class="t" style="left:795.62px;top:582px;font-size:14px;font-weight:700;text-decoration:underline;color:#465464;transform:scaleX(1.1556);text-decoration-color:#5d6874;">0</a>
<a class="t" style="left:895.57px;top:582px;font-size:14px;font-weight:700;text-decoration:underline;color:#465464;transform:scaleX(1.1556);text-decoration-color:#5d6874;">0</a>
<a class="t" style="left:995.52px;top:582px;font-size:14px;font-weight:700;text-decoration:underline;color:#465464;transform:scaleX(1.1556);text-decoration-color:#5d6874;">0</a>
<a class="t" style="left:1095.47px;top:582px;font-size:14px;font-weight:700;text-decoration:underline;color:#465464;transform:scaleX(1.1556);text-decoration-color:#5d6874;">0</a>
<a class="t" style="left:1195.42px;top:582px;font-size:14px;font-weight:700;text-decoration:underline;color:#465464;transform:scaleX(1.1556);text-decoration-color:#5d6874;">0</a>
<a class="t" style="left:1295.37px;top:582px;font-size:14px;font-weight:700;text-decoration:underline;color:#465464;transform:scaleX(1.1556);text-decoration-color:#5d6874;">0</a>
<a class="t" style="left:1395.32px;top:582px;font-size:14px;font-weight:700;text-decoration:underline;color:#465464;transform:scaleX(1.1556);text-decoration-color:#5d6874;">0</a>
</div>
<div role="row">
<div style="position:absolute;left:12px;top:622px;width:1475px;height:39px;background:#fff"></div>
<div style="position:absolute;left:12px;top:661px;width:1475px;height:1px;background:#adadad"></div>
<svg style="position:absolute;left:12px;top:629.5px;" width="24" height="24" viewBox="0 0 24 24"><circle cx="12" cy="12" r="9.1" fill="#fff" stroke="#6a6a6a" stroke-width="1.5"/><path d="M8.8 10.7 L12 13.9 L15.2 10.7" fill="none" stroke="#303030" stroke-width="2.1"/></svg>
<a class="t" style="left:39.71px;top:623px;font-size:13.8px;font-weight:700;text-decoration:underline;color:#0c0c0c;transform:scaleX(0.9872);-webkit-text-stroke:.2px #0c0c0c;">Loin</a>
<a class="t" style="left:195.92px;top:622px;font-size:14px;font-weight:700;text-decoration:underline;color:#465464;transform:scaleX(1.1556);text-decoration-color:#5d6874;">0</a>
<a class="t" style="left:295.87px;top:622px;font-size:14px;font-weight:700;text-decoration:underline;color:#465464;transform:scaleX(1.1556);text-decoration-color:#5d6874;">0</a>
<a class="t" style="left:395.82px;top:622px;font-size:14px;font-weight:700;text-decoration:underline;color:#465464;transform:scaleX(1.1556);text-decoration-color:#5d6874;">0</a>
<a class="t" style="left:495.77px;top:622px;font-size:14px;font-weight:700;text-decoration:underline;color:#465464;transform:scaleX(1.1556);text-decoration-color:#5d6874;">0</a>
<a class="t" style="left:595.72px;top:622px;font-size:14px;font-weight:700;text-decoration:underline;color:#465464;transform:scaleX(1.1556);text-decoration-color:#5d6874;">0</a>
<a class="t" style="left:695.67px;top:622px;font-size:14px;font-weight:700;text-decoration:underline;color:#465464;transform:scaleX(1.1556);text-decoration-color:#5d6874;">0</a>
<a class="t" style="left:795.62px;top:622px;font-size:14px;font-weight:700;text-decoration:underline;color:#465464;transform:scaleX(1.1556);text-decoration-color:#5d6874;">0</a>
<a class="t" style="left:895.57px;top:622px;font-size:14px;font-weight:700;text-decoration:underline;color:#465464;transform:scaleX(1.1556);text-decoration-color:#5d6874;">0</a>
<a class="t" style="left:995.52px;top:622px;font-size:14px;font-weight:700;text-decoration:underline;color:#465464;transform:scaleX(1.1556);text-decoration-color:#5d6874;">0</a>
<a class="t" style="left:1095.47px;top:622px;font-size:14px;font-weight:700;text-decoration:underline;color:#465464;transform:scaleX(1.1556);text-decoration-color:#5d6874;">0</a>
<a class="t" style="left:1195.42px;top:622px;font-size:14px;font-weight:700;text-decoration:underline;color:#465464;transform:scaleX(1.1556);text-decoration-color:#5d6874;">0</a>
<a class="t" style="left:1295.37px;top:622px;font-size:14px;font-weight:700;text-decoration:underline;color:#465464;transform:scaleX(1.1556);text-decoration-color:#5d6874;">0</a>
<a class="t" style="left:1395.32px;top:622px;font-size:14px;font-weight:700;text-decoration:underline;color:#465464;transform:scaleX(1.1556);text-decoration-color:#5d6874;">0</a>
</div>
<div role="row">
<div style="position:absolute;left:12px;top:662px;width:1475px;height:39px;background:#fff"></div>
<div style="position:absolute;left:12px;top:701px;width:1475px;height:1px;background:#adadad"></div>
<svg style="position:absolute;left:12px;top:669.5px;" width="24" height="24" viewBox="0 0 24 24"><circle cx="12" cy="12" r="9.1" fill="#fff" stroke="#6a6a6a" stroke-width="1.5"/><path d="M8.8 10.7 L12 13.9 L15.2 10.7" fill="none" stroke="#303030" stroke-width="2.1"/></svg>
<a class="t" style="left:39.73px;top:663px;font-size:13.8px;font-weight:700;text-decoration:underline;color:#0c0c0c;transform:scaleX(0.9749);-webkit-text-stroke:.2px #0c0c0c;">Loin S/E</a>
<a class="t" style="left:195.92px;top:662px;font-size:14px;font-weight:700;text-decoration:underline;color:#465464;transform:scaleX(1.1556);text-decoration-color:#5d6874;">0</a>
<a class="t" style="left:295.87px;top:662px;font-size:14px;font-weight:700;text-decoration:underline;color:#465464;transform:scaleX(1.1556);text-decoration-color:#5d6874;">0</a>
<a class="t" style="left:395.82px;top:662px;font-size:14px;font-weight:700;text-decoration:underline;color:#465464;transform:scaleX(1.1556);text-decoration-color:#5d6874;">0</a>
<a class="t" style="left:495.77px;top:662px;font-size:14px;font-weight:700;text-decoration:underline;color:#465464;transform:scaleX(1.1556);text-decoration-color:#5d6874;">0</a>
<a class="t" style="left:595.72px;top:662px;font-size:14px;font-weight:700;text-decoration:underline;color:#465464;transform:scaleX(1.1556);text-decoration-color:#5d6874;">0</a>
<a class="t" style="left:695.67px;top:662px;font-size:14px;font-weight:700;text-decoration:underline;color:#465464;transform:scaleX(1.1556);text-decoration-color:#5d6874;">0</a>
<a class="t" style="left:795.62px;top:662px;font-size:14px;font-weight:700;text-decoration:underline;color:#465464;transform:scaleX(1.1556);text-decoration-color:#5d6874;">0</a>
<a class="t" style="left:895.57px;top:662px;font-size:14px;font-weight:700;text-decoration:underline;color:#465464;transform:scaleX(1.1556);text-decoration-color:#5d6874;">0</a>
<a class="t" style="left:995.52px;top:662px;font-size:14px;font-weight:700;text-decoration:underline;color:#465464;transform:scaleX(1.1556);text-decoration-color:#5d6874;">0</a>
<a class="t" style="left:1095.47px;top:662px;font-size:14px;font-weight:700;text-decoration:underline;color:#465464;transform:scaleX(1.1556);text-decoration-color:#5d6874;">0</a>
<a class="t" style="left:1195.42px;top:662px;font-size:14px;font-weight:700;text-decoration:underline;color:#465464;transform:scaleX(1.1556);text-decoration-color:#5d6874;">0</a>
<a class="t" style="left:1295.37px;top:662px;font-size:14px;font-weight:700;text-decoration:underline;color:#465464;transform:scaleX(1.1556);text-decoration-color:#5d6874;">0</a>
<a class="t" style="left:1395.32px;top:662px;font-size:14px;font-weight:700;text-decoration:underline;color:#465464;transform:scaleX(1.1556);text-decoration-color:#5d6874;">0</a>
</div>
<div role="row">
<div style="position:absolute;left:12px;top:702px;width:1475px;height:39px;background:#fff"></div>
<div style="position:absolute;left:12px;top:741px;width:1475px;height:1px;background:#adadad"></div>
<svg style="position:absolute;left:12px;top:709.5px;" width="24" height="24" viewBox="0 0 24 24"><circle cx="12" cy="12" r="9.1" fill="#fff" stroke="#6a6a6a" stroke-width="1.5"/><path d="M8.8 10.7 L12 13.9 L15.2 10.7" fill="none" stroke="#303030" stroke-width="2.1"/></svg>
<a class="t" style="left:39.64px;top:703px;font-size:13.8px;font-weight:700;text-decoration:underline;color:#0c0c0c;transform:scaleX(1.0627);-webkit-text-stroke:.2px #0c0c0c;">Middle</a>
<a class="t" style="left:195.92px;top:702px;font-size:14px;font-weight:700;text-decoration:underline;color:#465464;transform:scaleX(1.1556);text-decoration-color:#5d6874;">0</a>
<a class="t" style="left:295.87px;top:702px;font-size:14px;font-weight:700;text-decoration:underline;color:#465464;transform:scaleX(1.1556);text-decoration-color:#5d6874;">0</a>
<a class="t" style="left:395.82px;top:702px;font-size:14px;font-weight:700;text-decoration:underline;color:#465464;transform:scaleX(1.1556);text-decoration-color:#5d6874;">0</a>
<a class="t" style="left:495.77px;top:702px;font-size:14px;font-weight:700;text-decoration:underline;color:#465464;transform:scaleX(1.1556);text-decoration-color:#5d6874;">0</a>
<a class="t" style="left:595.72px;top:702px;font-size:14px;font-weight:700;text-decoration:underline;color:#465464;transform:scaleX(1.1556);text-decoration-color:#5d6874;">0</a>
<a class="t" style="left:695.67px;top:702px;font-size:14px;font-weight:700;text-decoration:underline;color:#465464;transform:scaleX(1.1556);text-decoration-color:#5d6874;">0</a>
<a class="t" style="left:795.62px;top:702px;font-size:14px;font-weight:700;text-decoration:underline;color:#465464;transform:scaleX(1.1556);text-decoration-color:#5d6874;">0</a>
<a class="t" style="left:895.57px;top:702px;font-size:14px;font-weight:700;text-decoration:underline;color:#465464;transform:scaleX(1.1556);text-decoration-color:#5d6874;">0</a>
<a class="t" style="left:995.52px;top:702px;font-size:14px;font-weight:700;text-decoration:underline;color:#465464;transform:scaleX(1.1556);text-decoration-color:#5d6874;">0</a>
<a class="t" style="left:1095.47px;top:702px;font-size:14px;font-weight:700;text-decoration:underline;color:#465464;transform:scaleX(1.1556);text-decoration-color:#5d6874;">0</a>
<a class="t" style="left:1195.42px;top:702px;font-size:14px;font-weight:700;text-decoration:underline;color:#465464;transform:scaleX(1.1556);text-decoration-color:#5d6874;">0</a>
<a class="t" style="left:1295.37px;top:702px;font-size:14px;font-weight:700;text-decoration:underline;color:#465464;transform:scaleX(1.1556);text-decoration-color:#5d6874;">0</a>
<a class="t" style="left:1395.32px;top:702px;font-size:14px;font-weight:700;text-decoration:underline;color:#465464;transform:scaleX(1.1556);text-decoration-color:#5d6874;">0</a>
</div>
<div role="row">
<div style="position:absolute;left:12px;top:742px;width:1475px;height:39px;background:#fff"></div>
<div style="position:absolute;left:12px;top:781px;width:1475px;height:1px;background:#adadad"></div>
<svg style="position:absolute;left:12px;top:749.5px;" width="24" height="24" viewBox="0 0 24 24"><circle cx="12" cy="12" r="9.1" fill="#fff" stroke="#6a6a6a" stroke-width="1.5"/><path d="M8.8 10.7 L12 13.9 L15.2 10.7" fill="none" stroke="#303030" stroke-width="2.1"/></svg>
<a class="t" style="left:40.21px;top:743px;font-size:13.8px;font-weight:700;text-decoration:underline;color:#0c0c0c;transform:scaleX(0.9780);-webkit-text-stroke:.2px #0c0c0c;">Shoulder</a>
<a class="t" style="left:195.92px;top:742px;font-size:14px;font-weight:700;text-decoration:underline;color:#465464;transform:scaleX(1.1556);text-decoration-color:#5d6874;">0</a>
<a class="t" style="left:295.96px;top:742px;font-size:14px;font-weight:700;text-decoration:underline;color:#0c0c0c;transform:scaleX(1.0700);">-6526</a>
<a class="t" style="left:395.82px;top:742px;font-size:14px;font-weight:700;text-decoration:underline;color:#465464;transform:scaleX(1.1556);text-decoration-color:#5d6874;">0</a>
<a class="t" style="left:495.77px;top:742px;font-size:14px;font-weight:700;text-decoration:underline;color:#465464;transform:scaleX(1.1556);text-decoration-color:#5d6874;">0</a>
<a class="t" style="left:595.72px;top:742px;font-size:14px;font-weight:700;text-decoration:underline;color:#465464;transform:scaleX(1.1556);text-decoration-color:#5d6874;">0</a>
<a class="t" style="left:695.67px;top:742px;font-size:14px;font-weight:700;text-decoration:underline;color:#465464;transform:scaleX(1.1556);text-decoration-color:#5d6874;">0</a>
<a class="t" style="left:795.62px;top:742px;font-size:14px;font-weight:700;text-decoration:underline;color:#465464;transform:scaleX(1.1556);text-decoration-color:#5d6874;">0</a>
<a class="t" style="left:895.57px;top:742px;font-size:14px;font-weight:700;text-decoration:underline;color:#465464;transform:scaleX(1.1556);text-decoration-color:#5d6874;">0</a>
<a class="t" style="left:995.52px;top:742px;font-size:14px;font-weight:700;text-decoration:underline;color:#465464;transform:scaleX(1.1556);text-decoration-color:#5d6874;">0</a>
<a class="t" style="left:1095.47px;top:742px;font-size:14px;font-weight:700;text-decoration:underline;color:#465464;transform:scaleX(1.1556);text-decoration-color:#5d6874;">0</a>
<a class="t" style="left:1195.42px;top:742px;font-size:14px;font-weight:700;text-decoration:underline;color:#465464;transform:scaleX(1.1556);text-decoration-color:#5d6874;">0</a>
<a class="t" style="left:1295.37px;top:742px;font-size:14px;font-weight:700;text-decoration:underline;color:#465464;transform:scaleX(1.1556);text-decoration-color:#5d6874;">0</a>
<a class="t" style="left:1395.32px;top:742px;font-size:14px;font-weight:700;text-decoration:underline;color:#465464;transform:scaleX(1.1556);text-decoration-color:#5d6874;">0</a>
</div>
<div style="position:absolute;left:1487px;top:218px;width:17px;height:569px;background:#f0f0f0"></div>
<div style="position:absolute;left:1488px;top:279px;width:16px;height:368px;background:#cdcdcd"></div>
<svg style="position:absolute;left:1490px;top:266px;" width="12" height="10" viewBox="0 0 12 10"><path d="M2.4 7.6 L6 3.2 L9.6 7.6" fill="none" stroke="#8a8a8a" stroke-width="1.2"/></svg>
<svg style="position:absolute;left:1490px;top:773px;" width="12" height="10" viewBox="0 0 12 10"><path d="M2.4 3.4 L6 8 L9.6 3.4" fill="none" stroke="#8a8a8a" stroke-width="1.2"/></svg>
<div style="position:absolute;left:12px;top:787px;width:1492px;height:16px;background:#f0f0f0"></div>
<div style="position:absolute;left:28.5px;top:787px;width:1374px;height:16px;background:#cdcdcd"></div>
<svg style="position:absolute;left:15px;top:789px;" width="10" height="12" viewBox="0 0 10 12"><path d="M6.6 2.6 L3 6.2 L6.6 9.8" fill="none" stroke="#8a8a8a" stroke-width="1.2"/></svg>
<svg style="position:absolute;left:1474px;top:789px;" width="10" height="12" viewBox="0 0 10 12"><path d="M3 2.6 L6.8 6.2 L3 9.8" fill="none" stroke="#8a8a8a" stroke-width="1.2"/></svg>
</main>
<footer>
<div style="position:absolute;left:10px;top:810px;width:1492px;height:26px;border:2px solid #bdbdbd;border-radius:4.5px;background:#fff"></div>
<span class="t" style="left:21.08px;top:806px;font-size:13.4px;font-weight:700;color:#808080;transform:scaleX(1.0445);">Available</span>
<span class="t" style="left:111.19px;top:806px;font-size:13.4px;font-weight:700;color:#0c0c0c;transform:scaleX(1.0238);">Oversold</span>
<svg style="position:absolute;left:200px;top:821px;" width="10" height="10" viewBox="0 0 10 10"><circle cx="4.6" cy="4.5" r="3.1" fill="#f4f400" stroke="#a9a97a" stroke-width=".9"/></svg>
<span class="t" style="left:209.77px;top:806px;font-size:13px;color:#1e1e1e;transform:scaleX(1.1061);">= Warning</span>
<svg style="position:absolute;left:304px;top:821px;" width="10" height="10" viewBox="0 0 10 10"><circle cx="4.8" cy="4.5" r="3.1" fill="#ff9a00" stroke="#c9a36a" stroke-width=".9"/></svg>
<span class="t" style="left:313.98px;top:806px;font-size:13px;color:#1e1e1e;transform:scaleX(1.0990);">= Urgent</span>
</footer>
</body>
</html>
